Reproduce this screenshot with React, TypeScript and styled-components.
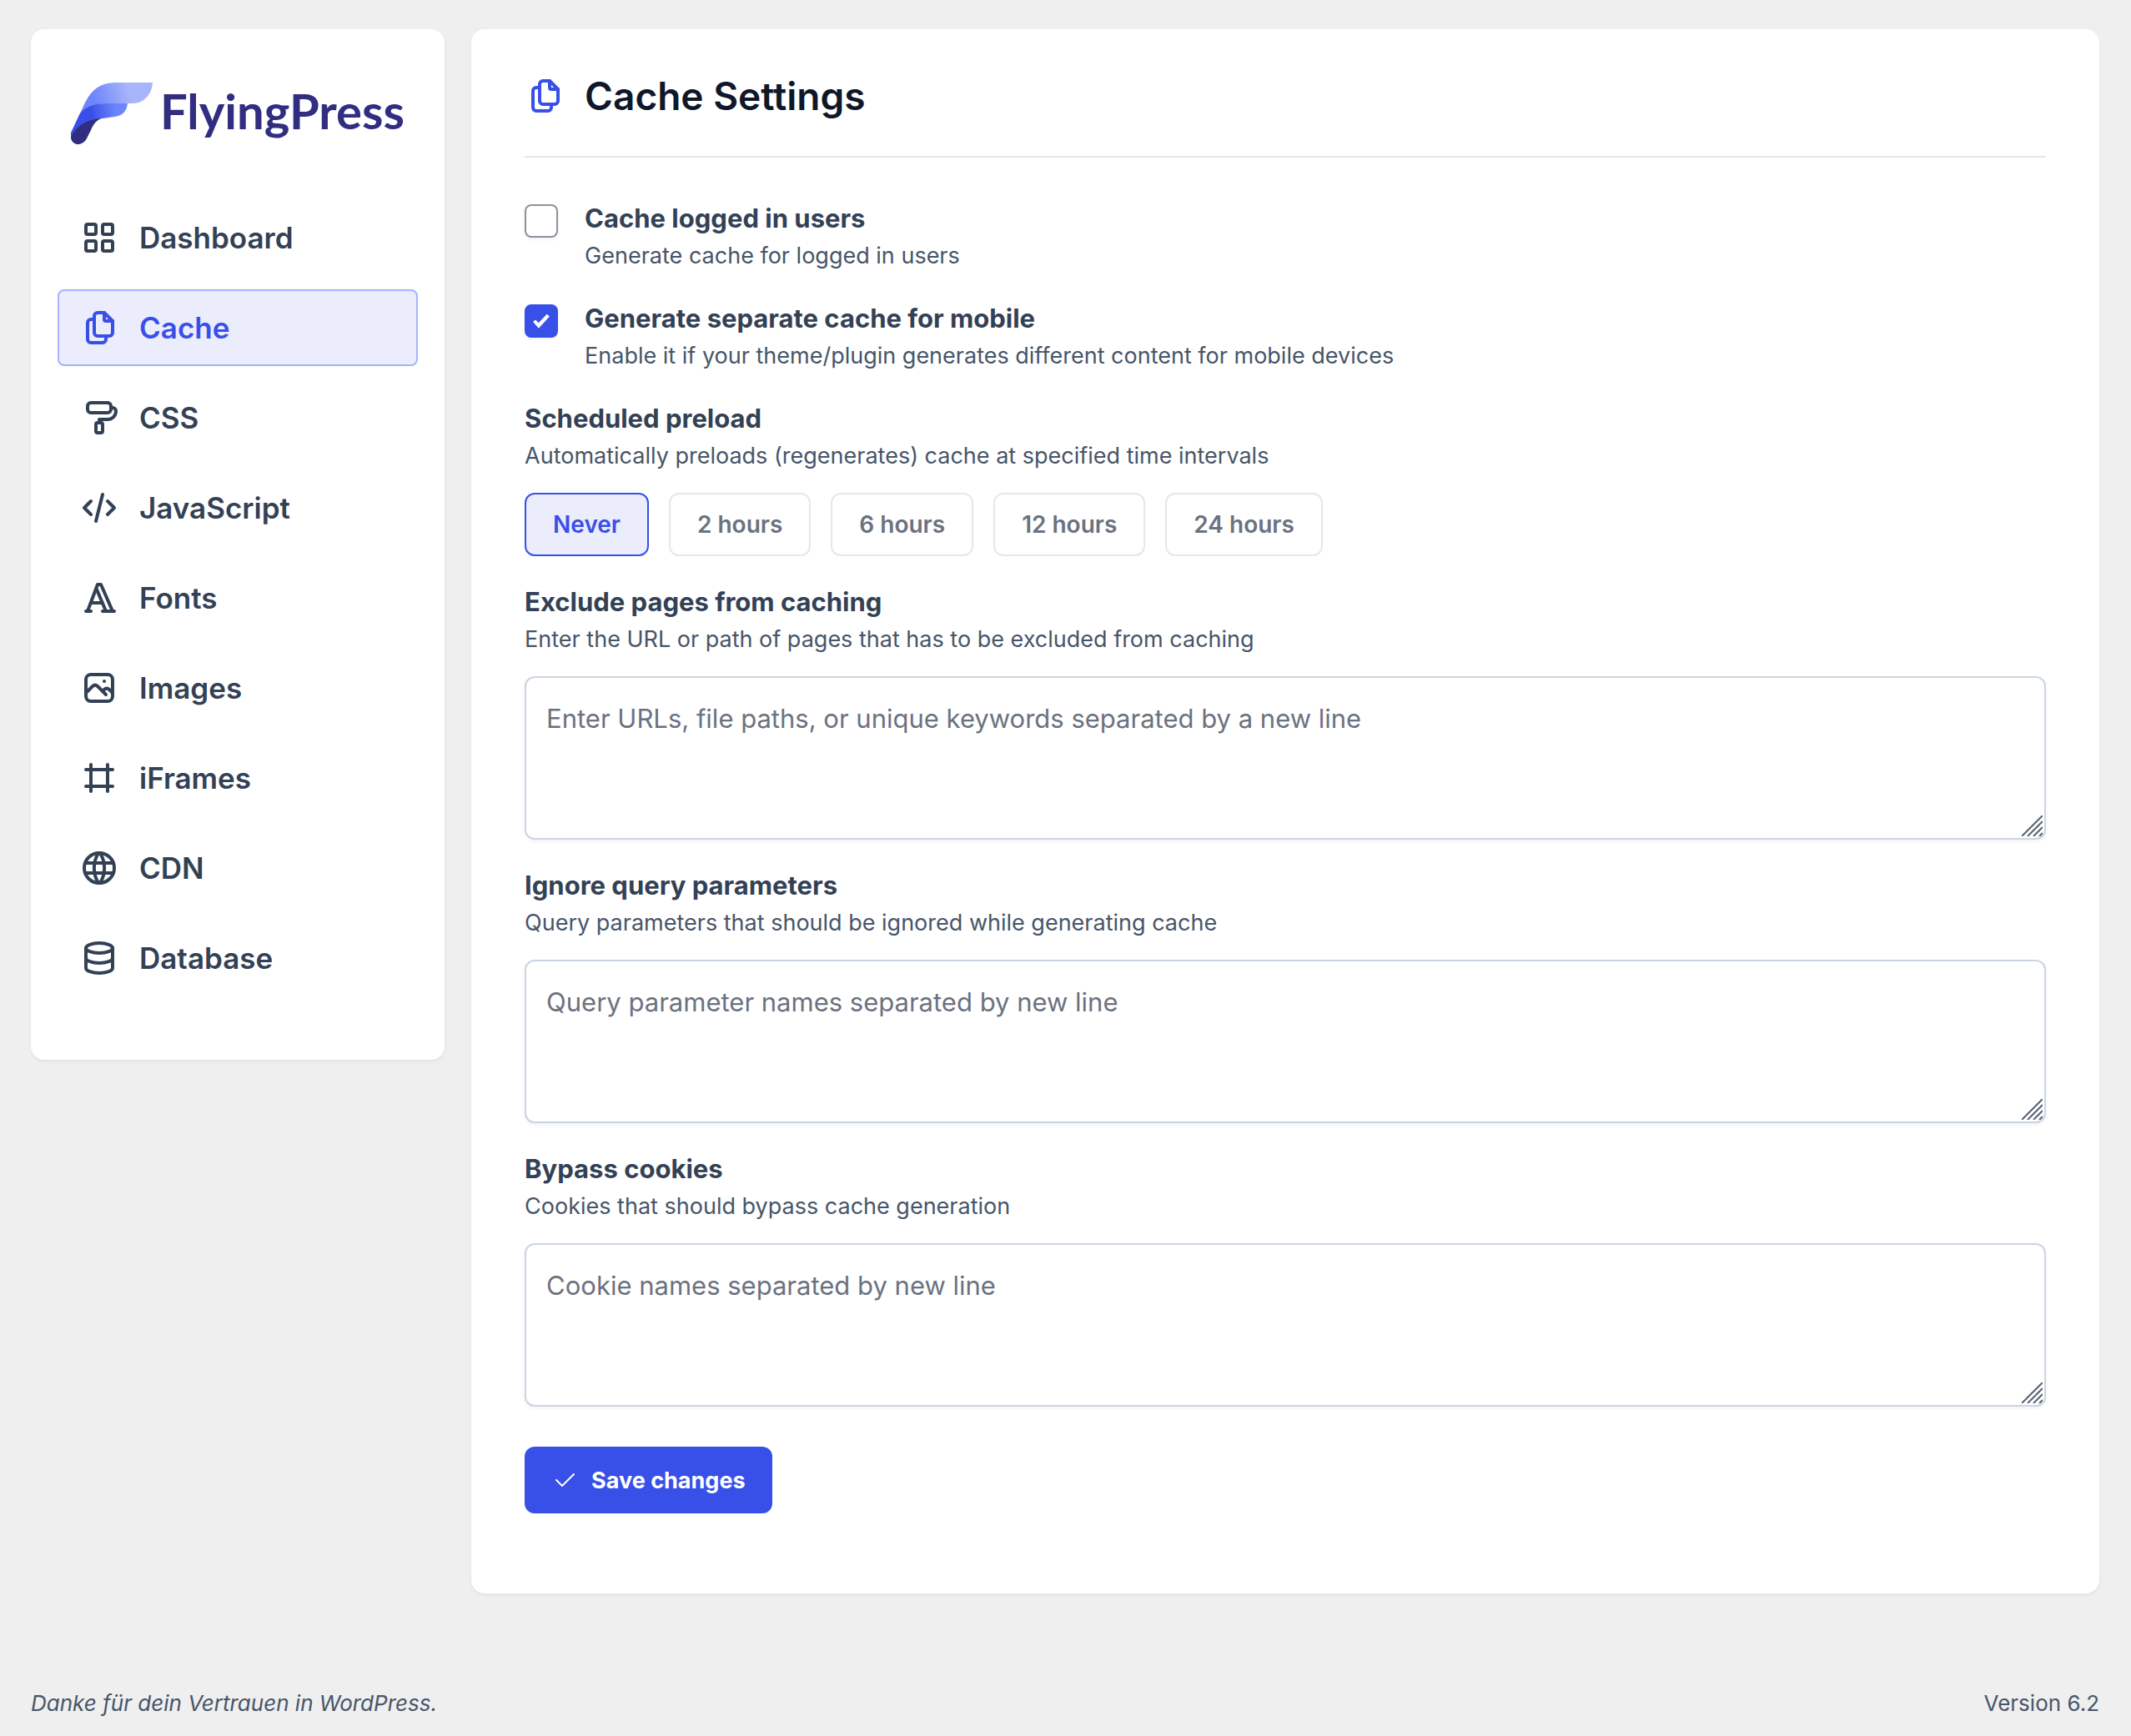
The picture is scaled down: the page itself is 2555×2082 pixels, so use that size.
import React, { useState } from "react";
import styled, { createGlobalStyle } from "styled-components";

const GlobalStyle = createGlobalStyle`
  *, *::before, *::after { box-sizing: border-box; }
  body {
    margin: 0;
    background: #efefef;
    color: #334155;
    font-family: Inter, "Liberation Sans", sans-serif;
  }
`;

const Page = styled.div`
  display: flex;
  flex-direction: column;
  min-height: 100vh;
  padding: 35px 38px 16px 37px;
`;

const Columns = styled.div`
  display: flex;
  align-items: flex-start;
  gap: 32px;
`;

const Card = styled.div`
  background: #fff;
  border-radius: 16px;
  box-shadow: 0 2px 4px rgba(15, 23, 42, 0.06);
`;

const Sidebar = styled(Card).attrs({ as: "aside" })`
  flex: 0 0 496px;
  padding: 64px 32px 76px;
`;

const Brand = styled.a`
  display: flex;
  align-items: flex-start;
  gap: 9px;
  height: 74px;
  margin: 0 16px 66px;
  color: #312e81;
  text-decoration: none;
`;

const BrandName = styled.span`
  font-family: Lato, "Liberation Sans", sans-serif;
  font-size: 58px;
  font-weight: 700;
  line-height: 68px;
`;

const Nav = styled.nav`
  display: flex;
  flex-direction: column;
  gap: 16px;
`;

const NavLink = styled.a<{ $active: boolean }>`
  display: flex;
  align-items: center;
  gap: 24px;
  height: 92px;
  padding: 0 24px;
  border: 2px solid ${(p) => (p.$active ? "#a5b4fc" : "transparent")};
  border-radius: 8px;
  background: ${(p) => (p.$active ? "#ebecfc" : "transparent")};
  color: ${(p) => (p.$active ? "#384fe8" : "#334155")};
  font-size: 35px;
  font-weight: 600;
  text-decoration: none;
`;

const Main = styled(Card).attrs({ as: "main" })`
  flex: 1;
  min-width: 0;
  padding: 48px 64px 96px;
`;

const Header = styled.header`
  display: flex;
  align-items: center;
  gap: 24px;
  padding-bottom: 40px;
  border-bottom: 2px solid #e5e7eb;
  color: #384fe8;
`;

const Title = styled.h1`
  margin: 0;
  color: #0f172a;
  font-size: 46px;
  font-weight: 600;
  line-height: 64px;
`;

const Form = styled.form`
  display: flex;
  flex-direction: column;
  gap: 30px;
  margin-top: 48px;
`;

const CheckRow = styled.div`
  display: flex;
  align-items: flex-start;
  gap: 32px;
`;

const Checkbox = styled.input`
  appearance: none;
  flex: none;
  display: grid;
  place-items: center;
  width: 40px;
  height: 40px;
  margin: 8px 0 0;
  border: 2px solid #8c929d;
  border-radius: 8px;
  background: #fff;
  box-shadow: 0 2px 4px rgba(15, 23, 42, 0.06);

  &:checked {
    border-color: #384fe8;
    background: #384fe8;
  }

  &:checked::before {
    content: "";
    width: 20px;
    height: 18px;
    background: #fff;
    clip-path: polygon(0% 55%, 15% 42%, 33% 62%, 83% 4%, 99% 20%, 34% 98%);
  }
`;

const Label = styled.label`
  display: block;
  font-size: 31px;
  font-weight: 700;
  line-height: 50px;
`;

const Legend = styled.legend`
  padding: 0;
  font-size: 31px;
  font-weight: 700;
  line-height: 50px;
`;

const Hint = styled.p`
  margin: 0;
  color: #475569;
  font-size: 27px;
  line-height: 40px;
`;

const Fieldset = styled.fieldset`
  min-width: 0;
  margin: 0;
  padding: 0;
  border: 0;
`;

const Options = styled.div`
  display: flex;
  flex-wrap: wrap;
  gap: 24px;
  margin-top: 24px;
`;

const Option = styled.button<{ $active: boolean }>`
  height: 76px;
  padding: 0 32px;
  border: 2px solid ${(p) => (p.$active ? "#384fe8" : "#e5e7eb")};
  border-radius: 12px;
  background: ${(p) => (p.$active ? "#ebecfc" : "#fff")};
  color: ${(p) => (p.$active ? "#384fe8" : "#6b7280")};
  font: 600 28px Inter, "Liberation Sans", sans-serif;
`;

const AreaWrap = styled.div`
  position: relative;
  margin-top: 24px;
`;

const Area = styled.textarea`
  display: block;
  width: 100%;
  height: 196px;
  padding: 24px;
  border: 2px solid #cbd5e1;
  border-radius: 12px;
  background: #fff;
  box-shadow: 0 2px 4px rgba(15, 23, 42, 0.06);
  color: #334155;
  font: 400 31px/50px Inter, "Liberation Sans", sans-serif;
  resize: vertical;

  &::placeholder {
    color: #6b7280;
    opacity: 1;
  }

  &::-webkit-resizer {
    display: none;
  }
`;

const Grip = styled.svg`
  position: absolute;
  right: 4px;
  bottom: 4px;
  pointer-events: none;
`;

const SaveButton = styled.button`
  display: flex;
  align-items: center;
  align-self: flex-start;
  gap: 16px;
  height: 80px;
  margin-top: 18px;
  padding: 0 32px;
  border: 0;
  border-radius: 12px;
  background: #384fe8;
  color: #fff;
  font: 700 27px Inter, "Liberation Sans", sans-serif;
`;

const Footer = styled.footer`
  display: flex;
  justify-content: space-between;
  margin-top: auto;
  padding-top: 24px;
  color: #475569;
  font-size: 26px;
  line-height: 46px;
`;

const iconPaths = {
  grid: [
    "M5 4h4a1 1 0 0 1 1 1v4a1 1 0 0 1 -1 1h-4a1 1 0 0 1 -1 -1v-4a1 1 0 0 1 1 -1",
    "M15 4h4a1 1 0 0 1 1 1v4a1 1 0 0 1 -1 1h-4a1 1 0 0 1 -1 -1v-4a1 1 0 0 1 1 -1",
    "M5 14h4a1 1 0 0 1 1 1v4a1 1 0 0 1 -1 1h-4a1 1 0 0 1 -1 -1v-4a1 1 0 0 1 1 -1",
    "M15 14h4a1 1 0 0 1 1 1v4a1 1 0 0 1 -1 1h-4a1 1 0 0 1 -1 -1v-4a1 1 0 0 1 1 -1",
  ],
  files: [
    "M15 3v4a1 1 0 0 0 1 1h4",
    "M18 17h-7a2 2 0 0 1 -2 -2v-10a2 2 0 0 1 2 -2h4l5 5v7a2 2 0 0 1 -2 2z",
    "M16 17v2a2 2 0 0 1 -2 2h-7a2 2 0 0 1 -2 -2v-10a2 2 0 0 1 2 -2h2",
  ],
  paint: [
    "M7 3h10a2 2 0 0 1 2 2v2a2 2 0 0 1 -2 2h-10a2 2 0 0 1 -2 -2v-2a2 2 0 0 1 2 -2",
    "M19 6h1a2 2 0 0 1 2 2a5 5 0 0 1 -5 5h-5v2",
    "M11 15h2a1 1 0 0 1 1 1v4a1 1 0 0 1 -1 1h-2a1 1 0 0 1 -1 -1v-4a1 1 0 0 1 1 -1",
  ],
  code: ["M7 8l-4 4l4 4", "M17 8l4 4l-4 4", "M14 4l-4 16"],
  type: ["M4 20h3", "M14 20h7", "M6.9 15h6.9", "M10.2 6.3l5.8 13.7", "M5 20l6 -16h2l7 16"],
  photo: [
    "M15 8h.01",
    "M7 4h10a3 3 0 0 1 3 3v10a3 3 0 0 1 -3 3h-10a3 3 0 0 1 -3 -3v-10a3 3 0 0 1 3 -3",
    "M4 15l4 -4a3 5 0 0 1 3 0l5 5",
    "M14 14l1 -1a3 5 0 0 1 3 0l2 2",
  ],
  frame: ["M4 7h16", "M4 17h16", "M7 4v16", "M17 4v16"],
  world: [
    "M3 12a9 9 0 1 0 18 0a9 9 0 1 0 -18 0",
    "M3.6 9h16.8",
    "M3.6 15h16.8",
    "M11.5 3a17 17 0 0 0 0 18",
    "M12.5 3a17 17 0 0 1 0 18",
  ],
  database: [
    "M4 6a8 3 0 1 0 16 0a8 3 0 1 0 -16 0",
    "M4 6v6a8 3 0 0 0 16 0v-6",
    "M4 12v6a8 3 0 0 0 16 0v-6",
  ],
};

type IconName = keyof typeof iconPaths;

function Icon({ name }: { name: IconName }) {
  return (
    <svg
      width="48"
      height="48"
      viewBox="0 0 24 24"
      fill="none"
      stroke="currentColor"
      strokeWidth="2"
      strokeLinecap="round"
      strokeLinejoin="round"
      aria-hidden="true"
    >
      {iconPaths[name].map((d) => (
        <path key={d} d={d} />
      ))}
    </svg>
  );
}

function Logo() {
  return (
    <svg width="98" height="75" viewBox="0 0 98 75" aria-hidden="true">
      <defs>
        <linearGradient id="wingTop" x1="20" y1="30" x2="80" y2="14" gradientUnits="userSpaceOnUse">
          <stop offset="0.15" stopColor="#6d85fa" />
          <stop offset="0.85" stopColor="#a8b4fb" />
        </linearGradient>
        <linearGradient id="wingMid" x1="18" y1="40" x2="60" y2="32" gradientUnits="userSpaceOnUse">
          <stop offset="0.15" stopColor="#384fe8" />
          <stop offset="0.85" stopColor="#6d85fa" />
        </linearGradient>
      </defs>
      <path d="M4 52L17 24C25 8 36 0 53 0H98C97 14 88 25 74 25H42C24 26 12 38 4 52Z" fill="url(#wingTop)" />
      <path d="M0 68V60L11 37C18 29 28 25 42 25H68C67 35 61 40 52 41L38 43C18 46 6 58 0 68Z" fill="url(#wingMid)" />
      <path d="M0 66C5 53 19 44 36 43C30 46 27 50 24 57L19 67C14 77 1 76 0 66Z" fill="#312e81" />
    </svg>
  );
}

const navItems: { label: string; icon: IconName }[] = [
  { label: "Dashboard", icon: "grid" },
  { label: "Cache", icon: "files" },
  { label: "CSS", icon: "paint" },
  { label: "JavaScript", icon: "code" },
  { label: "Fonts", icon: "type" },
  { label: "Images", icon: "photo" },
  { label: "iFrames", icon: "frame" },
  { label: "CDN", icon: "world" },
  { label: "Database", icon: "database" },
];

const checks = [
  {
    id: "logged-in",
    label: "Cache logged in users",
    hint: "Generate cache for logged in users",
    on: false,
  },
  {
    id: "mobile",
    label: "Generate separate cache for mobile",
    hint: "Enable it if your theme/plugin generates different content for mobile devices",
    on: true,
  },
];

const intervals = ["Never", "2 hours", "6 hours", "12 hours", "24 hours"];

const areas = [
  {
    id: "exclude",
    label: "Exclude pages from caching",
    hint: "Enter the URL or path of pages that has to be excluded from caching",
    placeholder: "Enter URLs, file paths, or unique keywords separated by a new line",
  },
  {
    id: "queries",
    label: "Ignore query parameters",
    hint: "Query parameters that should be ignored while generating cache",
    placeholder: "Query parameter names separated by new line",
  },
  {
    id: "cookies",
    label: "Bypass cookies",
    hint: "Cookies that should bypass cache generation",
    placeholder: "Cookie names separated by new line",
  },
];

export default function App() {
  const [interval, setInterval] = useState("Never");

  return (
    <>
      <GlobalStyle />
      <Page>
        <Columns>
          <Sidebar>
            <Brand href="#">
              <Logo />
              <BrandName>FlyingPress</BrandName>
            </Brand>
            <Nav>
              {navItems.map((item) => (
                <NavLink key={item.label} href="#" $active={item.label === "Cache"}>
                  <Icon name={item.icon} />
                  {item.label}
                </NavLink>
              ))}
            </Nav>
          </Sidebar>
          <Main>
            <Header>
              <Icon name="files" />
              <Title>Cache Settings</Title>
            </Header>
            <Form onSubmit={(e) => e.preventDefault()}>
              {checks.map((c) => (
                <CheckRow key={c.id}>
                  <Checkbox type="checkbox" id={c.id} defaultChecked={c.on} />
                  <div>
                    <Label htmlFor={c.id}>{c.label}</Label>
                    <Hint>{c.hint}</Hint>
                  </div>
                </CheckRow>
              ))}
              <Fieldset>
                <Legend>Scheduled preload</Legend>
                <Hint>Automatically preloads (regenerates) cache at specified time intervals</Hint>
                <Options>
                  {intervals.map((t) => (
                    <Option
                      key={t}
                      type="button"
                      $active={t === interval}
                      aria-pressed={t === interval}
                      onClick={() => setInterval(t)}
                    >
                      {t}
                    </Option>
                  ))}
                </Options>
              </Fieldset>
              {areas.map((a) => (
                <div key={a.id}>
                  <Label htmlFor={a.id}>{a.label}</Label>
                  <Hint>{a.hint}</Hint>
                  <AreaWrap>
                    <Area id={a.id} placeholder={a.placeholder} />
                    <Grip width="25" height="25" viewBox="0 0 25 25" stroke="#566174" strokeWidth="2" aria-hidden="true">
                      <path d="M0 25L25 0M7 25L25 7M14 25L25 14M21 25L25 21" />
                    </Grip>
                  </AreaWrap>
                </div>
              ))}
              <SaveButton type="submit">
                <svg width="32" height="32" viewBox="0 0 32 32" fill="none" stroke="currentColor" strokeWidth="2" strokeLinecap="round" strokeLinejoin="round" aria-hidden="true">
                  <path d="M6 16l7 7L27 9" />
                </svg>
                Save changes
              </SaveButton>
            </Form>
          </Main>
        </Columns>
        <Footer>
          <em>Danke für dein Vertrauen in WordPress.</em>
          <span>Version 6.2</span>
        </Footer>
      </Page>
    </>
  );
}
